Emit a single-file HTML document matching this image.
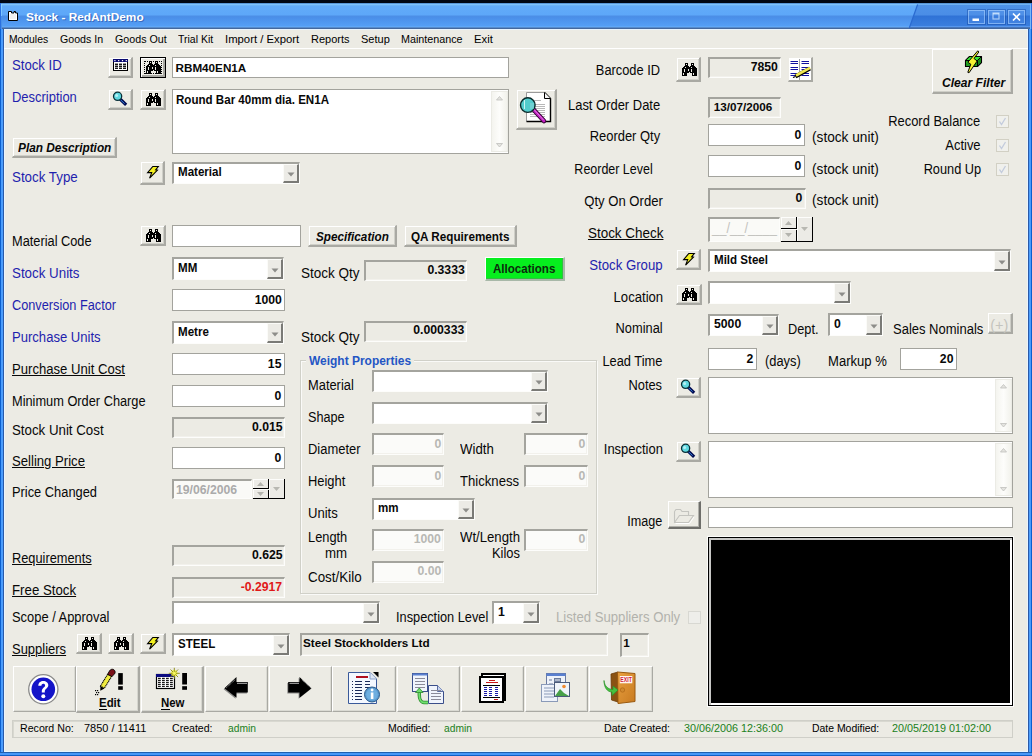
<!DOCTYPE html>
<html><head><meta charset="utf-8"><title>Stock - RedAntDemo</title>
<style>
html,body{margin:0;padding:0;width:1032px;height:756px;overflow:hidden;background:#ecebe4}
body{position:relative;font-family:"Liberation Sans",sans-serif}
div,svg{position:absolute}
.t{line-height:16px;white-space:nowrap}
</style></head><body>
<div style="left:0px;top:0px;width:1032px;height:3px;background:#000612;"></div>
<div style="left:0px;top:3px;width:1032px;height:26px;background:linear-gradient(180deg,#2a5fae 0px,#86ccff 1px,#74b8f6 2px,#62abf8 3px,#5da7f9 12px,#4d8fe6 13px,#4a8ee8 14px,#559ff6 23px,#69aef8 24px,#44689e 25px);"></div>
<svg style="left:0;top:3px" width="1032" height="26"><defs><linearGradient id="rg" x1="0" y1="0" x2="0" y2="1"><stop offset="0" stop-color="#80c4fa"/><stop offset="0.06" stop-color="#4e92e8"/><stop offset="0.46" stop-color="#4a8de6"/><stop offset="0.5" stop-color="#2f72d6"/><stop offset="0.9" stop-color="#3a7ede"/><stop offset="0.94" stop-color="#5898ee"/><stop offset="1" stop-color="#3d639c"/></linearGradient></defs><path d="M917.6 1 L1030 1 L1030 25 L909.3 25 Z" fill="url(#rg)"/><path d="M917.6 1.5 L909.3 25" stroke="#2a6ad0" stroke-width="1.2"/></svg>
<div style="left:0px;top:29px;width:4px;height:727px;background:linear-gradient(90deg,#0a60d0 0px,#0a60d0 1px,#4a9cfc 1px,#4a9cfc 3px,#2a5aa8 3px);"></div>
<div style="left:1028px;top:29px;width:4px;height:727px;background:linear-gradient(90deg,#2a5aa8 0px,#2a5aa8 1px,#4a9cfc 1px,#4a9cfc 3px,#0a60d0 3px);"></div>
<div style="left:0px;top:752px;width:1032px;height:4px;background:linear-gradient(180deg,#2060b0 0px,#2060b0 1px,#4898f8 1px,#4898f8 3px,#1060c8 3px);"></div>
<div style="left:0px;top:3px;width:1px;height:26px;background:#2a70e0;"></div>
<div style="left:1px;top:4px;width:1px;height:25px;background:linear-gradient(180deg,#86d0ff 0px,#78c0ff 12px,#4a90e8 12px);"></div>
<div style="left:1031px;top:3px;width:1px;height:26px;background:#2a70e0;"></div>
<div style="left:1030px;top:4px;width:1px;height:25px;background:#78b8f8;"></div>
<div style="left:4px;top:29px;width:1024px;height:723px;background:#ecebe4;box-shadow:inset 1px 1px 0 #e8f4ff,inset -1px -1px 0 #e8f4ff;"></div>
<svg style="left:7px;top:10px" width="12" height="12"><path d="M1.5 1.5H4.5V3H7V1.5H8.5V3H10.5V10.5H1.5Z" fill="#fff" stroke="#000" stroke-width="1"/><rect x="3" y="4" width="6" height="5" fill="#f0f0f0"/></svg>
<div class="t" style="top:9px;font-size:11px;color:#ffffff;font-weight:bold;left:26px;transform:scaleX(1.075);transform-origin:0 0;text-shadow:1px 1px 0 #3a6cc0;">Stock - RedAntDemo</div>
<div style="left:967.5px;top:10px;width:17.5px;height:13.5px;border:1px solid rgba(170,210,255,0.6);background:rgba(90,150,235,0.3);box-sizing:border-box;box-shadow:0 0 0 1px rgba(20,70,160,0.45);"></div>
<div style="left:987.5px;top:10px;width:17.5px;height:13.5px;border:1px solid rgba(170,210,255,0.6);background:rgba(90,150,235,0.3);box-sizing:border-box;box-shadow:0 0 0 1px rgba(20,70,160,0.45);"></div>
<div style="left:1007.5px;top:10px;width:17.5px;height:13.5px;border:1px solid rgba(170,210,255,0.6);background:rgba(90,150,235,0.3);box-sizing:border-box;box-shadow:0 0 0 1px rgba(20,70,160,0.45);"></div>
<svg style="left:967px;top:10px" width="60" height="14"><rect x="5.5" y="8.5" width="6.5" height="2.5" fill="#fff"/><rect x="26" y="3" width="6" height="6" fill="none" stroke="rgba(215,235,255,0.7)" stroke-width="1.2"/><rect x="26" y="3" width="6" height="1.5" fill="rgba(215,235,255,0.7)"/><path d="M46 3.5L53 10.5M53 3.5L46 10.5" stroke="#fff" stroke-width="1.7"/></svg>
<div style="left:4px;top:48px;width:1024px;height:1px;background:#ffffff;"></div>
<div class="t" style="top:31px;font-size:11.2px;color:#000;left:9px;transform:scaleX(0.9236784134464898);transform-origin:0 0;">Modules</div>
<div class="t" style="top:31px;font-size:11.2px;color:#000;left:60px;transform:scaleX(0.9505473348368997);transform-origin:0 0;">Goods In</div>
<div class="t" style="top:31px;font-size:11.2px;color:#000;left:115px;transform:scaleX(0.9545966506028545);transform-origin:0 0;">Goods Out</div>
<div class="t" style="top:31px;font-size:11.2px;color:#000;left:178px;transform:scaleX(0.9375978051687742);transform-origin:0 0;">Trial Kit</div>
<div class="t" style="top:31px;font-size:11.2px;color:#000;left:225.3px;transform:scaleX(1.011703351692867);transform-origin:0 0;">Import / Export</div>
<div class="t" style="top:31px;font-size:11.2px;color:#000;left:310.7px;transform:scaleX(0.9817922170653338);transform-origin:0 0;">Reports</div>
<div class="t" style="top:31px;font-size:11.2px;color:#000;left:361px;transform:scaleX(0.9840434619195682);transform-origin:0 0;">Setup</div>
<div class="t" style="top:31px;font-size:11.2px;color:#000;left:400.5px;transform:scaleX(0.9605938216351927);transform-origin:0 0;">Maintenance</div>
<div class="t" style="top:31px;font-size:11.2px;color:#000;left:473.5px;transform:scaleX(1.0069225928256766);transform-origin:0 0;">Exit</div>
<div class="t" style="top:58px;font-size:13.8px;color:#1f1fae;left:12px;transform:scaleX(0.9549971954148627);transform-origin:0 0;">Stock ID</div>
<div class="t" style="top:90px;font-size:13.8px;color:#1f1fae;left:12px;transform:scaleX(0.9388077196289862);transform-origin:0 0;">Description</div>
<div class="t" style="top:170px;font-size:13.8px;color:#1f1fae;left:12px;transform:scaleX(0.9674701042732072);transform-origin:0 0;">Stock Type</div>
<div class="t" style="top:234px;font-size:13.8px;color:#080808;left:12px;transform:scaleX(0.9266514892561248);transform-origin:0 0;">Material Code</div>
<div class="t" style="top:266px;font-size:13.8px;color:#1f1fae;left:12px;transform:scaleX(0.9672284203950859);transform-origin:0 0;">Stock Units</div>
<div class="t" style="top:298px;font-size:13.8px;color:#1f1fae;left:12px;transform:scaleX(0.9233849910023183);transform-origin:0 0;">Conversion Factor</div>
<div class="t" style="top:330px;font-size:13.8px;color:#1f1fae;left:12px;transform:scaleX(0.9468799417551277);transform-origin:0 0;">Purchase Units</div>
<div class="t" style="top:362px;font-size:13.8px;color:#080808;text-decoration:underline;left:12px;transform:scaleX(0.9505513513286161);transform-origin:0 0;">Purchase Unit Cost</div>
<div class="t" style="top:394px;font-size:13.8px;color:#080808;left:12px;transform:scaleX(0.9267315846997379);transform-origin:0 0;">Minimum Order Charge</div>
<div class="t" style="top:423px;font-size:13.8px;color:#080808;left:12px;transform:scaleX(0.9632479121194016);transform-origin:0 0;">Stock Unit Cost</div>
<div class="t" style="top:454px;font-size:13.8px;color:#080808;text-decoration:underline;left:12px;transform:scaleX(0.951760492079731);transform-origin:0 0;">Selling Price</div>
<div class="t" style="top:485px;font-size:13.8px;color:#080808;left:12px;transform:scaleX(0.9311512898328208);transform-origin:0 0;">Price Changed</div>
<div class="t" style="top:551px;font-size:13.8px;color:#080808;text-decoration:underline;left:12px;transform:scaleX(0.9266514892561248);transform-origin:0 0;">Requirements</div>
<div class="t" style="top:583px;font-size:13.8px;color:#080808;text-decoration:underline;left:12px;transform:scaleX(0.9607503145202009);transform-origin:0 0;">Free Stock</div>
<div class="t" style="top:610px;font-size:13.8px;color:#080808;left:12px;transform:scaleX(0.9345332500640245);transform-origin:0 0;">Scope / Approval</div>
<div class="t" style="top:642px;font-size:13.8px;color:#080808;text-decoration:underline;left:12px;transform:scaleX(0.9403993655346239);transform-origin:0 0;">Suppliers</div>
<div style="left:172px;top:57px;width:337px;height:21px;border:1px solid #a3a39d;background:#fff;box-sizing:border-box;"></div>
<div class="t" style="top:60px;font-size:11.7px;color:#080808;font-weight:bold;left:175.5px;">RBM40EN1A</div>
<div style="left:172px;top:89px;width:337px;height:65px;border:1px solid #a3a39d;background:#fff;box-sizing:border-box;"></div>
<div style="left:491px;top:91px;width:17px;height:61px;background:linear-gradient(90deg,#f4f4ef,#fdfdfb 50%,#f2f2ec);border:1px solid #ebebe5;box-sizing:border-box;"></div>
<svg style="left:496.0px;top:96px" width="7" height="5"><path d="M3.5 0.5L6.5 4H0.5Z" fill="#e4e4e0" stroke="#c0c0bc" stroke-width="0.8"/></svg>
<svg style="left:496.0px;top:143px" width="7" height="5"><path d="M0.5 0.5H6.5L3.5 4Z" fill="#e4e4e0" stroke="#c0c0bc" stroke-width="0.8"/></svg>
<div class="t" style="top:92px;font-size:13px;color:#080808;font-weight:bold;left:175.5px;transform:scaleX(0.89);transform-origin:0 0;">Round Bar 40mm dia. EN1A</div>
<div style="left:172px;top:162px;width:128px;height:22px;border-top:2px solid #a4a49e;border-left:2px solid #a4a49e;border-right:1px solid #fdfdfb;border-bottom:1px solid #fdfdfb;background:#fff;box-sizing:border-box;"></div>
<div style="left:283px;top:164px;width:16px;height:19px;background:#ecebe6;border-top:1px solid #fbfbf8;border-left:1px solid #fbfbf8;border-right:2px solid #7a7a76;border-bottom:2px solid #7a7a76;box-sizing:border-box;"></div>
<svg style="left:286.5px;top:172.0px" width="8" height="5"><path d="M0.5 0.5H7.5L4 4.5Z" fill="#8d8d8a"/></svg>
<div class="t" style="top:164px;font-size:13px;color:#080808;font-weight:bold;left:177.5px;transform:scaleX(0.89);transform-origin:0 0;">Material</div>
<div style="left:172px;top:225px;width:129px;height:22px;border:1px solid #a3a39d;background:#fff;box-sizing:border-box;"></div>
<div style="left:172px;top:257px;width:112px;height:23px;border-top:2px solid #a4a49e;border-left:2px solid #a4a49e;border-right:1px solid #fdfdfb;border-bottom:1px solid #fdfdfb;background:#fff;box-sizing:border-box;"></div>
<div style="left:267px;top:259px;width:16px;height:20px;background:#ecebe6;border-top:1px solid #fbfbf8;border-left:1px solid #fbfbf8;border-right:2px solid #7a7a76;border-bottom:2px solid #7a7a76;box-sizing:border-box;"></div>
<svg style="left:270.5px;top:267.5px" width="8" height="5"><path d="M0.5 0.5H7.5L4 4.5Z" fill="#8d8d8a"/></svg>
<div class="t" style="top:260px;font-size:13px;color:#080808;font-weight:bold;left:177.5px;transform:scaleX(0.89);transform-origin:0 0;">MM</div>
<div style="left:172px;top:289px;width:113px;height:22px;border:1px solid #a3a39d;background:#fff;box-sizing:border-box;"></div>
<div class="t" style="top:292px;font-size:13px;color:#080808;font-weight:bold;right:750.5px;text-align:right;transform:scaleX(0.94);transform-origin:100% 0;">1000</div>
<div style="left:172px;top:321px;width:112px;height:23px;border-top:2px solid #a4a49e;border-left:2px solid #a4a49e;border-right:1px solid #fdfdfb;border-bottom:1px solid #fdfdfb;background:#fff;box-sizing:border-box;"></div>
<div style="left:267px;top:323px;width:16px;height:20px;background:#ecebe6;border-top:1px solid #fbfbf8;border-left:1px solid #fbfbf8;border-right:2px solid #7a7a76;border-bottom:2px solid #7a7a76;box-sizing:border-box;"></div>
<svg style="left:270.5px;top:331.5px" width="8" height="5"><path d="M0.5 0.5H7.5L4 4.5Z" fill="#8d8d8a"/></svg>
<div class="t" style="top:324px;font-size:13px;color:#080808;font-weight:bold;left:177.5px;transform:scaleX(0.89);transform-origin:0 0;">Metre</div>
<div style="left:172px;top:353px;width:113px;height:22px;border:1px solid #a3a39d;background:#fff;box-sizing:border-box;"></div>
<div class="t" style="top:356px;font-size:13px;color:#080808;font-weight:bold;right:750.5px;text-align:right;transform:scaleX(0.94);transform-origin:100% 0;">15</div>
<div style="left:172px;top:385px;width:113px;height:22px;border:1px solid #a3a39d;background:#fff;box-sizing:border-box;"></div>
<div class="t" style="top:388px;font-size:13px;color:#080808;font-weight:bold;right:750.5px;text-align:right;transform:scaleX(0.94);transform-origin:100% 0;">0</div>
<div style="left:172px;top:417px;width:113px;height:21px;border-top:2px solid #a4a49e;border-left:2px solid #a4a49e;border-right:1px solid #fdfdfb;border-bottom:1px solid #fdfdfb;background:#ecebe4;box-sizing:border-box;box-shadow:inset -1px -1px 0 #f2f1ec;"></div>
<div class="t" style="top:419px;font-size:13px;color:#080808;font-weight:bold;right:749.5px;text-align:right;transform:scaleX(0.94);transform-origin:100% 0;">0.015</div>
<div style="left:172px;top:447px;width:113px;height:22px;border:1px solid #a3a39d;background:#fff;box-sizing:border-box;"></div>
<div class="t" style="top:450px;font-size:13px;color:#080808;font-weight:bold;right:750.5px;text-align:right;transform:scaleX(0.94);transform-origin:100% 0;">0</div>
<div style="left:172px;top:479px;width:80px;height:20px;border-top:2px solid #a4a49e;border-left:2px solid #a4a49e;border-right:1px solid #fdfdfb;border-bottom:1px solid #fdfdfb;background:#fafaf7;box-sizing:border-box;"></div>
<div class="t" style="top:482px;font-size:13px;color:#ababab;font-weight:bold;left:176px;transform:scaleX(0.94);transform-origin:0 0;">19/06/2006</div>
<div style="left:253px;top:479px;width:15px;height:9px;background:#ecebe6;box-shadow:inset 1px 1px 0 #fdfdfb;"></div>
<div style="left:253px;top:489px;width:15px;height:9px;background:#ecebe6;box-shadow:inset 1px 1px 0 #fdfdfb;"></div>
<div style="left:269px;top:479px;width:15px;height:19px;background:#ecebe6;box-shadow:inset 1px 1px 0 #fdfdfb;"></div>
<div style="left:253px;top:488px;width:16px;height:1px;background:#000;"></div>
<div style="left:253px;top:498px;width:32px;height:1px;background:#000;"></div>
<div style="left:268px;top:479px;width:1px;height:9px;background:#000;"></div>
<div style="left:268px;top:490px;width:1px;height:8px;background:#000;"></div>
<div style="left:284px;top:479px;width:1px;height:20px;background:#000;"></div>
<svg style="left:257.0px;top:481.5px" width="7" height="4"><path d="M0 4H7L3.5 0Z" fill="#b4b4ae"/></svg>
<svg style="left:257.0px;top:491.5px" width="7" height="4"><path d="M0 0H7L3.5 4Z" fill="#b4b4ae"/></svg>
<svg style="left:273.0px;top:486.5px" width="7" height="4"><path d="M0 0H7L3.5 4Z" fill="#b8b8b2"/></svg>
<div style="left:172px;top:545px;width:113px;height:21px;border-top:2px solid #a4a49e;border-left:2px solid #a4a49e;border-right:1px solid #fdfdfb;border-bottom:1px solid #fdfdfb;background:#ecebe4;box-sizing:border-box;box-shadow:inset -1px -1px 0 #f2f1ec;"></div>
<div class="t" style="top:547px;font-size:13px;color:#080808;font-weight:bold;right:749.5px;text-align:right;transform:scaleX(0.94);transform-origin:100% 0;">0.625</div>
<div style="left:172px;top:577px;width:113px;height:21px;border-top:2px solid #a4a49e;border-left:2px solid #a4a49e;border-right:1px solid #fdfdfb;border-bottom:1px solid #fdfdfb;background:#ecebe4;box-sizing:border-box;box-shadow:inset -1px -1px 0 #f2f1ec;"></div>
<div class="t" style="top:579px;font-size:13px;color:#e01818;font-weight:bold;right:749.5px;text-align:right;transform:scaleX(0.94);transform-origin:100% 0;">-0.2917</div>
<div style="left:172px;top:601px;width:208px;height:23px;border-top:2px solid #a4a49e;border-left:2px solid #a4a49e;border-right:1px solid #fdfdfb;border-bottom:1px solid #fdfdfb;background:#fff;box-sizing:border-box;"></div>
<div style="left:363px;top:603px;width:16px;height:20px;background:#ecebe6;border-top:1px solid #fbfbf8;border-left:1px solid #fbfbf8;border-right:2px solid #7a7a76;border-bottom:2px solid #7a7a76;box-sizing:border-box;"></div>
<svg style="left:366.5px;top:611.5px" width="8" height="5"><path d="M0.5 0.5H7.5L4 4.5Z" fill="#8d8d8a"/></svg>
<div style="left:172px;top:633px;width:118px;height:23px;border-top:2px solid #a4a49e;border-left:2px solid #a4a49e;border-right:1px solid #fdfdfb;border-bottom:1px solid #fdfdfb;background:#fff;box-sizing:border-box;"></div>
<div style="left:273px;top:635px;width:16px;height:20px;background:#ecebe6;border-top:1px solid #fbfbf8;border-left:1px solid #fbfbf8;border-right:2px solid #7a7a76;border-bottom:2px solid #7a7a76;box-sizing:border-box;"></div>
<svg style="left:276.5px;top:643.5px" width="8" height="5"><path d="M0.5 0.5H7.5L4 4.5Z" fill="#8d8d8a"/></svg>
<div class="t" style="top:636px;font-size:13px;color:#080808;font-weight:bold;left:177.5px;transform:scaleX(0.89);transform-origin:0 0;">STEEL</div>
<div class="t" style="top:266px;font-size:13.8px;color:#080808;left:300.7px;transform:scaleX(0.9796976061356487);transform-origin:0 0;">Stock Qty</div>
<div class="t" style="top:330px;font-size:13.8px;color:#080808;left:300.7px;transform:scaleX(0.9796976061356487);transform-origin:0 0;">Stock Qty</div>
<div style="left:364px;top:260px;width:103px;height:21px;border-top:2px solid #a4a49e;border-left:2px solid #a4a49e;border-right:1px solid #fdfdfb;border-bottom:1px solid #fdfdfb;background:#ecebe4;box-sizing:border-box;box-shadow:inset -1px -1px 0 #f2f1ec;"></div>
<div class="t" style="top:262px;font-size:13px;color:#080808;font-weight:bold;right:567.7px;text-align:right;transform:scaleX(0.94);transform-origin:100% 0;">0.3333</div>
<div style="left:364px;top:321px;width:103px;height:21px;border-top:2px solid #a4a49e;border-left:2px solid #a4a49e;border-right:1px solid #fdfdfb;border-bottom:1px solid #fdfdfb;background:#ecebe4;box-sizing:border-box;box-shadow:inset -1px -1px 0 #f2f1ec;"></div>
<div class="t" style="top:322px;font-size:13px;color:#080808;font-weight:bold;right:567.7px;text-align:right;transform:scaleX(0.94);transform-origin:100% 0;">0.000333</div>
<div style="left:300px;top:360px;width:297px;height:234px;border:1px solid #d0d0c8;box-sizing:border-box;box-shadow:inset 1px 1px 0 #fafaf8,1px 1px 0 #fafaf8;"></div>
<div style="left:306px;top:352px;width:108px;height:14px;background:#ecebe4;"></div>
<div class="t" style="top:353px;font-size:13px;color:#2456c4;font-weight:bold;left:309px;transform:scaleX(0.92);transform-origin:0 0;">Weight Properties</div>
<div class="t" style="top:378px;font-size:13.8px;color:#080808;left:308px;transform:scaleX(0.9332006375003262);transform-origin:0 0;">Material</div>
<div class="t" style="top:410px;font-size:13.8px;color:#080808;left:308px;transform:scaleX(0.917260904808336);transform-origin:0 0;">Shape</div>
<div class="t" style="top:442px;font-size:13.8px;color:#080808;left:308px;transform:scaleX(0.9378616419612695);transform-origin:0 0;">Diameter</div>
<div class="t" style="top:442px;font-size:13.8px;color:#080808;left:460.3px;transform:scaleX(0.9582103012922905);transform-origin:0 0;">Width</div>
<div class="t" style="top:474px;font-size:13.8px;color:#080808;left:308px;transform:scaleX(0.9351073422691865);transform-origin:0 0;">Height</div>
<div class="t" style="top:474px;font-size:13.8px;color:#080808;left:460.4px;transform:scaleX(0.9514265361071198);transform-origin:0 0;">Thickness</div>
<div class="t" style="top:506px;font-size:13.8px;color:#080808;left:308px;transform:scaleX(0.9478286712209357);transform-origin:0 0;">Units</div>
<div class="t" style="top:530px;font-size:13.8px;color:#080808;left:308px;transform:scaleX(0.9288157229309525);transform-origin:0 0;">Length</div>
<div class="t" style="top:546px;font-size:13.8px;color:#080808;left:324.7px;transform:scaleX(0.9612901296491129);transform-origin:0 0;">mm</div>
<div class="t" style="top:530px;font-size:13.8px;color:#080808;left:460.4px;transform:scaleX(0.9539282467096928);transform-origin:0 0;">Wt/Length</div>
<div class="t" style="top:546px;font-size:13.8px;color:#080808;right:512.4px;text-align:right;transform:scaleX(0.9360948130317771);transform-origin:100% 0;">Kilos</div>
<div class="t" style="top:570px;font-size:13.8px;color:#080808;left:308px;transform:scaleX(0.97067324044253);transform-origin:0 0;">Cost/Kilo</div>
<div style="left:372px;top:370px;width:176px;height:22px;border-top:2px solid #a4a49e;border-left:2px solid #a4a49e;border-right:1px solid #fdfdfb;border-bottom:1px solid #fdfdfb;background:#fff;box-sizing:border-box;"></div>
<div style="left:531px;top:372px;width:16px;height:19px;background:#ecebe6;border-top:1px solid #fbfbf8;border-left:1px solid #fbfbf8;border-right:2px solid #7a7a76;border-bottom:2px solid #7a7a76;box-sizing:border-box;"></div>
<svg style="left:534.5px;top:380.0px" width="8" height="5"><path d="M0.5 0.5H7.5L4 4.5Z" fill="#8d8d8a"/></svg>
<div style="left:372px;top:402px;width:176px;height:22px;border-top:2px solid #a4a49e;border-left:2px solid #a4a49e;border-right:1px solid #fdfdfb;border-bottom:1px solid #fdfdfb;background:#fff;box-sizing:border-box;"></div>
<div style="left:531px;top:404px;width:16px;height:19px;background:#ecebe6;border-top:1px solid #fbfbf8;border-left:1px solid #fbfbf8;border-right:2px solid #7a7a76;border-bottom:2px solid #7a7a76;box-sizing:border-box;"></div>
<svg style="left:534.5px;top:412.0px" width="8" height="5"><path d="M0.5 0.5H7.5L4 4.5Z" fill="#8d8d8a"/></svg>
<div style="left:372px;top:433px;width:72px;height:22px;border-top:2px solid #a4a49e;border-left:2px solid #a4a49e;border-right:1px solid #fdfdfb;border-bottom:1px solid #fdfdfb;background:#fbfbf9;box-sizing:border-box;box-shadow:inset -1px -1px 0 #f2f1ec;"></div>
<div class="t" style="top:436px;font-size:13px;color:#b8b8b4;font-weight:bold;right:590.7px;text-align:right;transform:scaleX(0.94);transform-origin:100% 0;">0</div>
<div style="left:524px;top:433px;width:64px;height:22px;border-top:2px solid #a4a49e;border-left:2px solid #a4a49e;border-right:1px solid #fdfdfb;border-bottom:1px solid #fdfdfb;background:#fbfbf9;box-sizing:border-box;box-shadow:inset -1px -1px 0 #f2f1ec;"></div>
<div class="t" style="top:436px;font-size:13px;color:#b8b8b4;font-weight:bold;right:446.70000000000005px;text-align:right;transform:scaleX(0.94);transform-origin:100% 0;">0</div>
<div style="left:372px;top:465px;width:72px;height:22px;border-top:2px solid #a4a49e;border-left:2px solid #a4a49e;border-right:1px solid #fdfdfb;border-bottom:1px solid #fdfdfb;background:#fbfbf9;box-sizing:border-box;box-shadow:inset -1px -1px 0 #f2f1ec;"></div>
<div class="t" style="top:468px;font-size:13px;color:#b8b8b4;font-weight:bold;right:590.7px;text-align:right;transform:scaleX(0.94);transform-origin:100% 0;">0</div>
<div style="left:524px;top:465px;width:64px;height:22px;border-top:2px solid #a4a49e;border-left:2px solid #a4a49e;border-right:1px solid #fdfdfb;border-bottom:1px solid #fdfdfb;background:#fbfbf9;box-sizing:border-box;box-shadow:inset -1px -1px 0 #f2f1ec;"></div>
<div class="t" style="top:468px;font-size:13px;color:#b8b8b4;font-weight:bold;right:446.70000000000005px;text-align:right;transform:scaleX(0.94);transform-origin:100% 0;">0</div>
<div style="left:372px;top:498px;width:103px;height:22px;border-top:2px solid #a4a49e;border-left:2px solid #a4a49e;border-right:1px solid #fdfdfb;border-bottom:1px solid #fdfdfb;background:#fff;box-sizing:border-box;"></div>
<div style="left:458px;top:500px;width:16px;height:19px;background:#ecebe6;border-top:1px solid #fbfbf8;border-left:1px solid #fbfbf8;border-right:2px solid #7a7a76;border-bottom:2px solid #7a7a76;box-sizing:border-box;"></div>
<svg style="left:461.5px;top:508.0px" width="8" height="5"><path d="M0.5 0.5H7.5L4 4.5Z" fill="#8d8d8a"/></svg>
<div class="t" style="top:500px;font-size:13px;color:#080808;font-weight:bold;left:377.5px;transform:scaleX(0.89);transform-origin:0 0;">mm</div>
<div style="left:372px;top:529px;width:72px;height:22px;border-top:2px solid #a4a49e;border-left:2px solid #a4a49e;border-right:1px solid #fdfdfb;border-bottom:1px solid #fdfdfb;background:#fbfbf9;box-sizing:border-box;box-shadow:inset -1px -1px 0 #f2f1ec;"></div>
<div class="t" style="top:531px;font-size:13px;color:#b8b8b4;font-weight:bold;right:590.7px;text-align:right;transform:scaleX(0.94);transform-origin:100% 0;">1000</div>
<div style="left:524px;top:529px;width:64px;height:22px;border-top:2px solid #a4a49e;border-left:2px solid #a4a49e;border-right:1px solid #fdfdfb;border-bottom:1px solid #fdfdfb;background:#fbfbf9;box-sizing:border-box;box-shadow:inset -1px -1px 0 #f2f1ec;"></div>
<div class="t" style="top:531px;font-size:13px;color:#b8b8b4;font-weight:bold;right:446.70000000000005px;text-align:right;transform:scaleX(0.94);transform-origin:100% 0;">0</div>
<div style="left:372px;top:561px;width:72px;height:22px;border-top:2px solid #a4a49e;border-left:2px solid #a4a49e;border-right:1px solid #fdfdfb;border-bottom:1px solid #fdfdfb;background:#fbfbf9;box-sizing:border-box;box-shadow:inset -1px -1px 0 #f2f1ec;"></div>
<div class="t" style="top:563px;font-size:13px;color:#b8b8b4;font-weight:bold;right:590.7px;text-align:right;transform:scaleX(0.94);transform-origin:100% 0;">0.00</div>
<div style="left:12px;top:137px;width:105px;height:21px;background:#ecebe4;border-top:1px solid #ecebe4;border-left:1px solid #ecebe4;border-right:2px solid #a9a9a3;border-bottom:2px solid #a9a9a3;box-sizing:border-box;box-shadow:inset 1px 1px 0 #fff,inset -1px -1px 0 #cfcfc8;"></div>
<div class="t" style="top:140px;font-size:13px;color:#080808;font-weight:bold;font-style:italic;left:17.5px;transform:scaleX(0.91);transform-origin:0 0;">Plan Description</div>
<div style="left:308px;top:225px;width:89px;height:22px;background:#ecebe4;border-top:1px solid #ecebe4;border-left:1px solid #ecebe4;border-right:2px solid #a9a9a3;border-bottom:2px solid #a9a9a3;box-sizing:border-box;box-shadow:inset 1px 1px 0 #fff,inset -1px -1px 0 #cfcfc8;"></div>
<div class="t" style="top:229px;font-size:13px;color:#080808;font-weight:bold;font-style:italic;left:316px;transform:scaleX(0.9);transform-origin:0 0;">Specification</div>
<div style="left:404px;top:225px;width:113px;height:22px;background:#ecebe4;border-top:1px solid #ecebe4;border-left:1px solid #ecebe4;border-right:2px solid #a9a9a3;border-bottom:2px solid #a9a9a3;box-sizing:border-box;box-shadow:inset 1px 1px 0 #fff,inset -1px -1px 0 #cfcfc8;"></div>
<div class="t" style="top:229px;font-size:13px;color:#080808;font-weight:bold;left:410.7px;transform:scaleX(0.9);transform-origin:0 0;">QA Requirements</div>
<div style="left:485px;top:257px;width:80px;height:24px;background:#06ee1e;border-top:1px solid #fff;border-left:1px solid #fff;border-right:2px solid #a8b8a8;border-bottom:2px solid #a8b8a8;box-sizing:border-box;box-shadow:inset -1px -1px 0 #30c040;"></div>
<div class="t" style="top:261px;font-size:13px;color:#0c2a0c;font-weight:bold;left:492.5px;transform:scaleX(0.89);transform-origin:0 0;">Allocations</div>
<div class="t" style="top:610px;font-size:13.8px;color:#080808;left:396.2px;transform:scaleX(0.9255307481394438);transform-origin:0 0;">Inspection Level</div>
<div style="left:492px;top:601px;width:48px;height:23px;border-top:2px solid #a4a49e;border-left:2px solid #a4a49e;border-right:1px solid #fdfdfb;border-bottom:1px solid #fdfdfb;background:#fff;box-sizing:border-box;"></div>
<div style="left:523px;top:603px;width:16px;height:20px;background:#ecebe6;border-top:1px solid #fbfbf8;border-left:1px solid #fbfbf8;border-right:2px solid #7a7a76;border-bottom:2px solid #7a7a76;box-sizing:border-box;"></div>
<svg style="left:526.5px;top:611.5px" width="8" height="5"><path d="M0.5 0.5H7.5L4 4.5Z" fill="#8d8d8a"/></svg>
<div class="t" style="top:604px;font-size:13px;color:#080808;font-weight:bold;left:497.5px;transform:scaleX(0.94);transform-origin:0 0;">1</div>
<div class="t" style="top:610px;font-size:13.8px;color:#b2b2ac;left:556.3px;transform:scaleX(0.9525069453631433);transform-origin:0 0;">Listed Suppliers Only</div>
<div style="left:688.3px;top:611.3px;width:12.5px;height:12.5px;border:1px solid #d8d8d2;background:#eeeeea;box-sizing:border-box;"></div>
<div style="left:300px;top:633px;width:308px;height:23px;border-top:2px solid #a4a49e;border-left:2px solid #a4a49e;border-right:1px solid #fdfdfb;border-bottom:1px solid #fdfdfb;background:#ecebe4;box-sizing:border-box;box-shadow:inset -1px -1px 0 #f2f1ec;"></div>
<div class="t" style="top:635px;font-size:11.7px;color:#080808;font-weight:bold;left:303px;">Steel Stockholders Ltd</div>
<div style="left:620px;top:633px;width:29px;height:24px;border-top:2px solid #a4a49e;border-left:2px solid #a4a49e;border-right:1px solid #fdfdfb;border-bottom:1px solid #fdfdfb;background:#ecebe4;box-sizing:border-box;box-shadow:inset -1px -1px 0 #f2f1ec;"></div>
<div class="t" style="top:635px;font-size:11.7px;color:#080808;font-weight:bold;left:623.3px;">1</div>
<div class="t" style="top:63px;font-size:13.8px;color:#080808;right:372.29999999999995px;text-align:right;transform:scaleX(0.9300278954044563);transform-origin:100% 0;">Barcode ID</div>
<div class="t" style="top:98px;font-size:13.8px;color:#080808;right:372.29999999999995px;text-align:right;transform:scaleX(0.9391895161187637);transform-origin:100% 0;">Last Order Date</div>
<div class="t" style="top:129px;font-size:13.8px;color:#080808;right:372.29999999999995px;text-align:right;transform:scaleX(0.9380746018796421);transform-origin:100% 0;">Reorder Qty</div>
<div class="t" style="top:162px;font-size:13.8px;color:#080808;right:379.4px;text-align:right;transform:scaleX(0.903376955450926);transform-origin:100% 0;">Reorder Level</div>
<div class="t" style="top:194px;font-size:13.8px;color:#080808;right:369px;text-align:right;transform:scaleX(0.9478948395201207);transform-origin:100% 0;">Qty On Order</div>
<div class="t" style="top:226px;font-size:13.8px;color:#080808;text-decoration:underline;right:369px;text-align:right;transform:scaleX(0.9746824616864266);transform-origin:100% 0;">Stock Check</div>
<div class="t" style="top:258px;font-size:13.8px;color:#1f1fae;right:369px;text-align:right;transform:scaleX(0.9583063402231974);transform-origin:100% 0;">Stock Group</div>
<div class="t" style="top:290px;font-size:13.8px;color:#080808;right:369px;text-align:right;transform:scaleX(0.9507294296641717);transform-origin:100% 0;">Location</div>
<div class="t" style="top:321px;font-size:13.8px;color:#080808;right:369.5px;text-align:right;transform:scaleX(0.9285635788223294);transform-origin:100% 0;">Nominal</div>
<div class="t" style="top:354px;font-size:13.8px;color:#080808;right:369.5px;text-align:right;transform:scaleX(0.931198947745189);transform-origin:100% 0;">Lead Time</div>
<div class="t" style="top:378px;font-size:13.8px;color:#080808;right:369.5px;text-align:right;transform:scaleX(0.9320856977899371);transform-origin:100% 0;">Notes</div>
<div class="t" style="top:442px;font-size:13.8px;color:#080808;right:369.5px;text-align:right;transform:scaleX(0.9395226974316632);transform-origin:100% 0;">Inspection</div>
<div class="t" style="top:514px;font-size:13.8px;color:#080808;right:369.5px;text-align:right;transform:scaleX(0.9126213908675932);transform-origin:100% 0;">Image</div>
<div style="left:708px;top:57px;width:73px;height:21px;border-top:2px solid #a4a49e;border-left:2px solid #a4a49e;border-right:1px solid #fdfdfb;border-bottom:1px solid #fdfdfb;background:#ecebe4;box-sizing:border-box;box-shadow:inset -1px -1px 0 #f2f1ec;"></div>
<div class="t" style="top:59px;font-size:13px;color:#080808;font-weight:bold;right:254px;text-align:right;transform:scaleX(0.94);transform-origin:100% 0;">7850</div>
<div style="left:708px;top:97px;width:73px;height:21px;border-top:2px solid #a4a49e;border-left:2px solid #a4a49e;border-right:1px solid #fdfdfb;border-bottom:1px solid #fdfdfb;background:#ecebe4;box-sizing:border-box;box-shadow:inset -1px -1px 0 #f2f1ec;"></div>
<div class="t" style="top:99px;font-size:11.7px;color:#080808;font-weight:bold;left:713.7px;">13/07/2006</div>
<div style="left:708px;top:124px;width:97px;height:22px;border:1px solid #a3a39d;background:#fff;box-sizing:border-box;"></div>
<div class="t" style="top:127px;font-size:13px;color:#080808;font-weight:bold;right:230.5px;text-align:right;transform:scaleX(0.94);transform-origin:100% 0;">0</div>
<div style="left:708px;top:155px;width:97px;height:22px;border:1px solid #a3a39d;background:#fff;box-sizing:border-box;"></div>
<div class="t" style="top:158px;font-size:13px;color:#080808;font-weight:bold;right:230.5px;text-align:right;transform:scaleX(0.94);transform-origin:100% 0;">0</div>
<div style="left:708px;top:188px;width:98px;height:21px;border-top:2px solid #a4a49e;border-left:2px solid #a4a49e;border-right:1px solid #fdfdfb;border-bottom:1px solid #fdfdfb;background:#ecebe4;box-sizing:border-box;box-shadow:inset -1px -1px 0 #f2f1ec;"></div>
<div class="t" style="top:190px;font-size:13px;color:#080808;font-weight:bold;right:229.5px;text-align:right;transform:scaleX(0.94);transform-origin:100% 0;">0</div>
<div class="t" style="top:130px;font-size:13.8px;color:#080808;left:811.7px;transform:scaleX(0.9899252323031645);transform-origin:0 0;">(stock unit)</div>
<div class="t" style="top:162px;font-size:13.8px;color:#080808;left:811.7px;transform:scaleX(0.9899252323031645);transform-origin:0 0;">(stock unit)</div>
<div class="t" style="top:193px;font-size:13.8px;color:#080808;left:811.7px;transform:scaleX(0.9899252323031645);transform-origin:0 0;">(stock unit)</div>
<div style="left:708px;top:217px;width:72px;height:25px;border-top:2px solid #a4a49e;border-left:2px solid #a4a49e;border-right:1px solid #fdfdfb;border-bottom:1px solid #fdfdfb;background:#fafaf7;box-sizing:border-box;"></div>
<div class="t" style="top:221px;font-size:13.8px;color:#c4c4c0;left:712px;transform:scaleX(0.94);transform-origin:0 0;">__/__/____</div>
<div style="left:781px;top:217px;width:15px;height:11px;background:#ecebe6;box-shadow:inset 1px 1px 0 #fdfdfb;"></div>
<div style="left:781px;top:229px;width:15px;height:12px;background:#ecebe6;box-shadow:inset 1px 1px 0 #fdfdfb;"></div>
<div style="left:797px;top:217px;width:15px;height:24px;background:#ecebe6;box-shadow:inset 1px 1px 0 #fdfdfb;"></div>
<div style="left:781px;top:228px;width:16px;height:1px;background:#000;"></div>
<div style="left:781px;top:241px;width:32px;height:1px;background:#000;"></div>
<div style="left:796px;top:217px;width:1px;height:11px;background:#000;"></div>
<div style="left:796px;top:230px;width:1px;height:11px;background:#000;"></div>
<div style="left:812px;top:217px;width:1px;height:25px;background:#000;"></div>
<svg style="left:785.0px;top:220.5px" width="7" height="4"><path d="M0 4H7L3.5 0Z" fill="#b4b4ae"/></svg>
<svg style="left:785.0px;top:233.0px" width="7" height="4"><path d="M0 0H7L3.5 4Z" fill="#b4b4ae"/></svg>
<svg style="left:801.0px;top:227.0px" width="7" height="4"><path d="M0 0H7L3.5 4Z" fill="#b8b8b2"/></svg>
<div style="left:708px;top:249px;width:303px;height:23px;border-top:2px solid #a4a49e;border-left:2px solid #a4a49e;border-right:1px solid #fdfdfb;border-bottom:1px solid #fdfdfb;background:#fff;box-sizing:border-box;"></div>
<div style="left:994px;top:251px;width:16px;height:20px;background:#ecebe6;border-top:1px solid #fbfbf8;border-left:1px solid #fbfbf8;border-right:2px solid #7a7a76;border-bottom:2px solid #7a7a76;box-sizing:border-box;"></div>
<svg style="left:997.5px;top:259.5px" width="8" height="5"><path d="M0.5 0.5H7.5L4 4.5Z" fill="#8d8d8a"/></svg>
<div class="t" style="top:252px;font-size:13px;color:#080808;font-weight:bold;left:713.5px;transform:scaleX(0.89);transform-origin:0 0;">Mild Steel</div>
<div style="left:708px;top:281px;width:143px;height:23px;border-top:2px solid #a4a49e;border-left:2px solid #a4a49e;border-right:1px solid #fdfdfb;border-bottom:1px solid #fdfdfb;background:#fff;box-sizing:border-box;"></div>
<div style="left:834px;top:283px;width:16px;height:20px;background:#ecebe6;border-top:1px solid #fbfbf8;border-left:1px solid #fbfbf8;border-right:2px solid #7a7a76;border-bottom:2px solid #7a7a76;box-sizing:border-box;"></div>
<svg style="left:837.5px;top:291.5px" width="8" height="5"><path d="M0.5 0.5H7.5L4 4.5Z" fill="#8d8d8a"/></svg>
<div style="left:708px;top:314px;width:71px;height:22px;border-top:2px solid #a4a49e;border-left:2px solid #a4a49e;border-right:1px solid #fdfdfb;border-bottom:1px solid #fdfdfb;background:#fff;box-sizing:border-box;"></div>
<div style="left:762px;top:316px;width:16px;height:19px;background:#ecebe6;border-top:1px solid #fbfbf8;border-left:1px solid #fbfbf8;border-right:2px solid #7a7a76;border-bottom:2px solid #7a7a76;box-sizing:border-box;"></div>
<svg style="left:765.5px;top:324.0px" width="8" height="5"><path d="M0.5 0.5H7.5L4 4.5Z" fill="#8d8d8a"/></svg>
<div class="t" style="top:316px;font-size:13px;color:#080808;font-weight:bold;left:713.5px;transform:scaleX(0.94);transform-origin:0 0;">5000</div>
<div class="t" style="top:322px;font-size:13.8px;color:#080808;left:788.3px;transform:scaleX(0.924746831605118);transform-origin:0 0;">Dept.</div>
<div style="left:828px;top:313px;width:55px;height:23px;border-top:2px solid #a4a49e;border-left:2px solid #a4a49e;border-right:1px solid #fdfdfb;border-bottom:1px solid #fdfdfb;background:#fff;box-sizing:border-box;"></div>
<div style="left:866px;top:315px;width:16px;height:20px;background:#ecebe6;border-top:1px solid #fbfbf8;border-left:1px solid #fbfbf8;border-right:2px solid #7a7a76;border-bottom:2px solid #7a7a76;box-sizing:border-box;"></div>
<svg style="left:869.5px;top:323.5px" width="8" height="5"><path d="M0.5 0.5H7.5L4 4.5Z" fill="#8d8d8a"/></svg>
<div class="t" style="top:316px;font-size:13px;color:#080808;font-weight:bold;left:833.5px;transform:scaleX(0.94);transform-origin:0 0;">0</div>
<div class="t" style="top:322px;font-size:13.8px;color:#080808;left:892.5px;transform:scaleX(0.9419100080872048);transform-origin:0 0;">Sales Nominals</div>
<div style="left:988px;top:313px;width:25px;height:21px;background:#ecebe4;border-top:1px solid #fff;border-left:1px solid #fff;border-right:2px solid #a9a9a3;border-bottom:2px solid #a9a9a3;box-sizing:border-box;box-shadow:inset -1px -1px 0 #cfcfc8;"></div>
<div class="t" style="top:318px;font-size:13.8px;color:#c4c4be;right:24px;text-align:right;transform:scaleX(1.05);transform-origin:100% 0;">(+)</div>
<div style="left:708px;top:348px;width:49px;height:22px;border:1px solid #a3a39d;background:#fff;box-sizing:border-box;"></div>
<div class="t" style="top:351px;font-size:13px;color:#080808;font-weight:bold;right:278.5px;text-align:right;transform:scaleX(0.94);transform-origin:100% 0;">2</div>
<div class="t" style="top:354px;font-size:13.8px;color:#080808;left:764.7px;transform:scaleX(0.9337963189383935);transform-origin:0 0;">(days)</div>
<div class="t" style="top:354px;font-size:13.8px;color:#080808;left:828.3px;transform:scaleX(0.946596959781703);transform-origin:0 0;">Markup %</div>
<div style="left:900px;top:348px;width:57px;height:22px;border:1px solid #a3a39d;background:#fff;box-sizing:border-box;"></div>
<div class="t" style="top:351px;font-size:13px;color:#080808;font-weight:bold;right:78.5px;text-align:right;transform:scaleX(0.94);transform-origin:100% 0;">20</div>
<div style="left:708px;top:377px;width:305px;height:57px;border:1px solid #a3a39d;background:#fff;box-sizing:border-box;"></div>
<div style="left:995px;top:379px;width:17px;height:53px;background:linear-gradient(90deg,#f4f4ef,#fdfdfb 50%,#f2f2ec);border:1px solid #ebebe5;box-sizing:border-box;"></div>
<svg style="left:1000.0px;top:384px" width="7" height="5"><path d="M3.5 0.5L6.5 4H0.5Z" fill="#e4e4e0" stroke="#c0c0bc" stroke-width="0.8"/></svg>
<svg style="left:1000.0px;top:423px" width="7" height="5"><path d="M0.5 0.5H6.5L3.5 4Z" fill="#e4e4e0" stroke="#c0c0bc" stroke-width="0.8"/></svg>
<div style="left:708px;top:441px;width:305px;height:57px;border:1px solid #a3a39d;background:#fff;box-sizing:border-box;"></div>
<div style="left:995px;top:443px;width:17px;height:53px;background:linear-gradient(90deg,#f4f4ef,#fdfdfb 50%,#f2f2ec);border:1px solid #ebebe5;box-sizing:border-box;"></div>
<svg style="left:1000.0px;top:448px" width="7" height="5"><path d="M3.5 0.5L6.5 4H0.5Z" fill="#e4e4e0" stroke="#c0c0bc" stroke-width="0.8"/></svg>
<svg style="left:1000.0px;top:487px" width="7" height="5"><path d="M0.5 0.5H6.5L3.5 4Z" fill="#e4e4e0" stroke="#c0c0bc" stroke-width="0.8"/></svg>
<div style="left:708px;top:507px;width:305px;height:21px;border:1px solid #a3a39d;background:#fff;box-sizing:border-box;"></div>
<div style="left:707px;top:536px;width:307px;height:171px;background:#fdfdfb;"></div>
<div style="left:708px;top:537px;width:305px;height:169px;background:#000;"></div>
<div style="left:709px;top:538px;width:303px;height:167px;background:#fff;border-top:2px solid #c8c8c6;border-left:2px solid #c8c8c6;box-sizing:border-box;"></div>
<div style="left:711px;top:540px;width:299px;height:163px;background:#000;"></div>
<div class="t" style="top:114px;font-size:13.8px;color:#080808;right:51.5px;text-align:right;transform:scaleX(0.9370081622195381);transform-origin:100% 0;">Record Balance</div>
<div class="t" style="top:138px;font-size:13.8px;color:#080808;right:51.5px;text-align:right;transform:scaleX(0.9393513020859319);transform-origin:100% 0;">Active</div>
<div class="t" style="top:162px;font-size:13.8px;color:#080808;right:51px;text-align:right;transform:scaleX(0.9253796948560455);transform-origin:100% 0;">Round Up</div>
<div style="left:996px;top:115px;width:13px;height:13px;border:1px solid #d2d0c4;background:#f0f0ec;box-sizing:border-box;"></div>
<svg style="left:996px;top:115px" width="13" height="13"><path d="M3.5 6.5L5.5 9.5L9.5 3" fill="none" stroke="#c3cbdc" stroke-width="1.3"/></svg>
<div style="left:996px;top:139px;width:13px;height:13px;border:1px solid #d2d0c4;background:#f0f0ec;box-sizing:border-box;"></div>
<svg style="left:996px;top:139px" width="13" height="13"><path d="M3.5 6.5L5.5 9.5L9.5 3" fill="none" stroke="#c3cbdc" stroke-width="1.3"/></svg>
<div style="left:996px;top:163px;width:13px;height:13px;border:1px solid #d2d0c4;background:#f0f0ec;box-sizing:border-box;"></div>
<svg style="left:996px;top:163px" width="13" height="13"><path d="M3.5 6.5L5.5 9.5L9.5 3" fill="none" stroke="#c3cbdc" stroke-width="1.3"/></svg>
<div style="left:932px;top:49px;width:81px;height:45px;background:#ecebe4;border-top:1px solid #fff;border-left:1px solid #fff;border-right:2px solid #a9a9a3;border-bottom:2px solid #a9a9a3;box-sizing:border-box;box-shadow:inset -1px -1px 0 #cfcfc8;"></div>
<div class="t" style="top:75px;font-size:13px;color:#080808;font-weight:bold;font-style:italic;left:942px;transform:scaleX(0.93);transform-origin:0 0;">Clear Filter</div>
<div style="left:12.3px;top:720.3px;width:1000.5px;height:17.3px;border:1px solid #cfcfc8;box-sizing:border-box;box-shadow:inset 1px 1px 0 #d8d8d0;"></div>
<div class="t" style="top:720px;font-size:10.7px;color:#000;left:19.9px;transform:scaleX(0.9942051859096132);transform-origin:0 0;">Record No:</div>
<div class="t" style="top:720px;font-size:10.7px;color:#000;left:84.10000000000001px;transform:scaleX(1.024944788850235);transform-origin:0 0;">7850 / 11411</div>
<div class="t" style="top:720px;font-size:10.7px;color:#000;left:172.3px;transform:scaleX(0.9893710388890897);transform-origin:0 0;">Created:</div>
<div class="t" style="top:720px;font-size:10.7px;color:#208020;left:227.8px;transform:scaleX(0.9608527568216793);transform-origin:0 0;">admin</div>
<div class="t" style="top:720px;font-size:10.7px;color:#000;left:387.9px;transform:scaleX(0.9766529696750261);transform-origin:0 0;">Modified:</div>
<div class="t" style="top:720px;font-size:10.7px;color:#208020;left:443.9px;transform:scaleX(0.9608527568216793);transform-origin:0 0;">admin</div>
<div class="t" style="top:720px;font-size:10.7px;color:#000;left:603.8px;transform:scaleX(0.9923558293750369);transform-origin:0 0;">Date Created:</div>
<div class="t" style="top:720px;font-size:10.7px;color:#208020;left:683.5px;transform:scaleX(1.0084977394752375);transform-origin:0 0;">30/06/2006 12:36:00</div>
<div class="t" style="top:720px;font-size:10.7px;color:#000;left:811.6999999999999px;transform:scaleX(0.9755520831611041);transform-origin:0 0;">Date Modified:</div>
<div class="t" style="top:720px;font-size:10.7px;color:#208020;left:891.5px;transform:scaleX(1.009516424060566);transform-origin:0 0;">20/05/2019 01:02:00</div>
<div style="left:108px;top:57px;width:25px;height:21px;background:#ecebe4;border-top:1px solid #ecebe4;border-left:1px solid #ecebe4;border-right:2px solid #a9a9a3;border-bottom:2px solid #a9a9a3;box-sizing:border-box;box-shadow:inset 1px 1px 0 #fff,inset -1px -1px 0 #cfcfc8;"></div>
<svg style="left:113px;top:59px" width="15" height="12" viewBox="0 0 15 12"><rect x="0.5" y="0.5" width="14" height="11" fill="#fff" stroke="#000" stroke-width="1"/><rect x="0" y="0" width="15" height="3" fill="#0a0a70"/><rect x="1.3" y="1" width="1.2" height="1.2" fill="#fff"/><rect x="5.1" y="1" width="1.2" height="1.2" fill="#fff"/><rect x="8.9" y="1" width="1.2" height="1.2" fill="#fff"/><rect x="12.7" y="1" width="1.2" height="1.2" fill="#fff"/><rect x="2" y="4.6" width="3" height="1.3" fill="#000"/><rect x="6" y="4.6" width="3" height="1.3" fill="#000"/><rect x="10" y="4.6" width="3" height="1.3" fill="#000"/><rect x="2" y="6.6" width="3" height="1.3" fill="#000"/><rect x="6" y="6.6" width="3" height="1.3" fill="#000"/><rect x="10" y="6.6" width="3" height="1.3" fill="#000"/><rect x="2" y="8.6" width="3" height="1.3" fill="#000"/><rect x="6" y="8.6" width="3" height="1.3" fill="#000"/><rect x="10" y="8.6" width="3" height="1.3" fill="#000"/></svg>
<div style="left:140px;top:57px;width:26px;height:21px;border:1px solid #000;background:#ecebe4;box-sizing:border-box;box-shadow:inset 1px 1px 0 #fff,inset -2px -2px 0 #a9a9a3;"></div>
<svg style="left:146px;top:61px" width="15" height="13" viewBox="0 0 15 13"><path shape-rendering="crispEdges" d="M3 0h3v1h-3zM9 0h3v1h-3zM3 1h1v1h-1zM5 1h1v1h-1zM9 1h1v1h-1zM11 1h1v1h-1zM3 2h3v1h-3zM9 2h3v1h-3zM2 3h5v1h-5zM8 3h5v1h-5zM1 4h2v1h-2zM4 4h5v1h-5zM10 4h4v1h-4zM0 5h15v1h-15zM0 6h2v1h-2zM3 6h3v1h-3zM7 6h2v1h-2zM10 6h5v1h-5zM0 7h2v1h-2zM3 7h3v1h-3zM7 7h2v1h-2zM10 7h5v1h-5zM0 8h2v1h-2zM3 8h6v1h-6zM10 8h5v1h-5zM0 9h7v1h-7zM8 9h7v1h-7zM0 10h1v1h-1zM2 10h3v1h-3zM10 10h1v1h-1zM12 10h3v1h-3zM0 11h1v1h-1zM2 11h3v1h-3zM10 11h1v1h-1zM12 11h3v1h-3zM0 12h5v1h-5zM10 12h5v1h-5z" fill="#000"/></svg>
<div style="left:144px;top:61px;width:18px;height:13px;border:1px dotted #000;box-sizing:border-box;"></div>
<div style="left:108px;top:89px;width:25px;height:21px;background:#ecebe4;border-top:1px solid #ecebe4;border-left:1px solid #ecebe4;border-right:2px solid #a9a9a3;border-bottom:2px solid #a9a9a3;box-sizing:border-box;box-shadow:inset 1px 1px 0 #fff,inset -1px -1px 0 #cfcfc8;"></div>
<svg style="left:112px;top:91px" width="16" height="16" viewBox="0 0 16 16"><path d="M8 8L13 12.8" stroke="#000a50" stroke-width="3.2" stroke-linecap="square"/><path d="M8.3 8.6L12.6 12.6" stroke="#3a8ae8" stroke-width="0.9"/><circle cx="5.6" cy="5.3" r="4.1" fill="#5ed8e0" stroke="#0a3038" stroke-width="1.3"/><circle cx="4.6" cy="4.4" r="1.5" fill="#b8f0f4"/></svg>
<div style="left:140px;top:89px;width:26px;height:21px;background:#ecebe4;border-top:1px solid #ecebe4;border-left:1px solid #ecebe4;border-right:2px solid #a9a9a3;border-bottom:2px solid #a9a9a3;box-sizing:border-box;box-shadow:inset 1px 1px 0 #fff,inset -1px -1px 0 #cfcfc8;"></div>
<svg style="left:146px;top:93px" width="15" height="13" viewBox="0 0 15 13"><path shape-rendering="crispEdges" d="M3 0h3v1h-3zM9 0h3v1h-3zM3 1h1v1h-1zM5 1h1v1h-1zM9 1h1v1h-1zM11 1h1v1h-1zM3 2h3v1h-3zM9 2h3v1h-3zM2 3h5v1h-5zM8 3h5v1h-5zM1 4h2v1h-2zM4 4h5v1h-5zM10 4h4v1h-4zM0 5h15v1h-15zM0 6h2v1h-2zM3 6h3v1h-3zM7 6h2v1h-2zM10 6h5v1h-5zM0 7h2v1h-2zM3 7h3v1h-3zM7 7h2v1h-2zM10 7h5v1h-5zM0 8h2v1h-2zM3 8h6v1h-6zM10 8h5v1h-5zM0 9h7v1h-7zM8 9h7v1h-7zM0 10h1v1h-1zM2 10h3v1h-3zM10 10h1v1h-1zM12 10h3v1h-3zM0 11h1v1h-1zM2 11h3v1h-3zM10 11h1v1h-1zM12 11h3v1h-3zM0 12h5v1h-5zM10 12h5v1h-5z" fill="#000"/></svg>
<div style="left:140px;top:161px;width:25px;height:24px;background:#ecebe4;border-top:1px solid #ecebe4;border-left:1px solid #ecebe4;border-right:2px solid #a9a9a3;border-bottom:2px solid #a9a9a3;box-sizing:border-box;box-shadow:inset 1px 1px 0 #fff,inset -1px -1px 0 #cfcfc8;"></div>
<svg style="left:146px;top:165px" width="14" height="14" viewBox="0 0 14 14"><path d="M6.8 1.5H12.3L9.6 4.8L11.5 5.2L3.6 13.2L5.7 7.6H1.6Z" fill="#f4f020" stroke="#000" stroke-width="1.1" stroke-linejoin="miter"/></svg>
<div style="left:140px;top:225px;width:26px;height:21px;background:#ecebe4;border-top:1px solid #ecebe4;border-left:1px solid #ecebe4;border-right:2px solid #a9a9a3;border-bottom:2px solid #a9a9a3;box-sizing:border-box;box-shadow:inset 1px 1px 0 #fff,inset -1px -1px 0 #cfcfc8;"></div>
<svg style="left:146px;top:229px" width="15" height="13" viewBox="0 0 15 13"><path shape-rendering="crispEdges" d="M3 0h3v1h-3zM9 0h3v1h-3zM3 1h1v1h-1zM5 1h1v1h-1zM9 1h1v1h-1zM11 1h1v1h-1zM3 2h3v1h-3zM9 2h3v1h-3zM2 3h5v1h-5zM8 3h5v1h-5zM1 4h2v1h-2zM4 4h5v1h-5zM10 4h4v1h-4zM0 5h15v1h-15zM0 6h2v1h-2zM3 6h3v1h-3zM7 6h2v1h-2zM10 6h5v1h-5zM0 7h2v1h-2zM3 7h3v1h-3zM7 7h2v1h-2zM10 7h5v1h-5zM0 8h2v1h-2zM3 8h6v1h-6zM10 8h5v1h-5zM0 9h7v1h-7zM8 9h7v1h-7zM0 10h1v1h-1zM2 10h3v1h-3zM10 10h1v1h-1zM12 10h3v1h-3zM0 11h1v1h-1zM2 11h3v1h-3zM10 11h1v1h-1zM12 11h3v1h-3zM0 12h5v1h-5zM10 12h5v1h-5z" fill="#000"/></svg>
<div style="left:76px;top:633px;width:26px;height:21px;background:#ecebe4;border-top:1px solid #ecebe4;border-left:1px solid #ecebe4;border-right:2px solid #a9a9a3;border-bottom:2px solid #a9a9a3;box-sizing:border-box;box-shadow:inset 1px 1px 0 #fff,inset -1px -1px 0 #cfcfc8;"></div>
<svg style="left:82px;top:637px" width="15" height="13" viewBox="0 0 15 13"><path shape-rendering="crispEdges" d="M3 0h3v1h-3zM9 0h3v1h-3zM3 1h1v1h-1zM5 1h1v1h-1zM9 1h1v1h-1zM11 1h1v1h-1zM3 2h3v1h-3zM9 2h3v1h-3zM2 3h5v1h-5zM8 3h5v1h-5zM1 4h2v1h-2zM4 4h5v1h-5zM10 4h4v1h-4zM0 5h15v1h-15zM0 6h2v1h-2zM3 6h3v1h-3zM7 6h2v1h-2zM10 6h5v1h-5zM0 7h2v1h-2zM3 7h3v1h-3zM7 7h2v1h-2zM10 7h5v1h-5zM0 8h2v1h-2zM3 8h6v1h-6zM10 8h5v1h-5zM0 9h7v1h-7zM8 9h7v1h-7zM0 10h1v1h-1zM2 10h3v1h-3zM10 10h1v1h-1zM12 10h3v1h-3zM0 11h1v1h-1zM2 11h3v1h-3zM10 11h1v1h-1zM12 11h3v1h-3zM0 12h5v1h-5zM10 12h5v1h-5z" fill="#000"/></svg>
<div style="left:108px;top:633px;width:26px;height:21px;background:#ecebe4;border-top:1px solid #ecebe4;border-left:1px solid #ecebe4;border-right:2px solid #a9a9a3;border-bottom:2px solid #a9a9a3;box-sizing:border-box;box-shadow:inset 1px 1px 0 #fff,inset -1px -1px 0 #cfcfc8;"></div>
<svg style="left:114px;top:637px" width="15" height="13" viewBox="0 0 15 13"><path shape-rendering="crispEdges" d="M3 0h3v1h-3zM9 0h3v1h-3zM3 1h1v1h-1zM5 1h1v1h-1zM9 1h1v1h-1zM11 1h1v1h-1zM3 2h3v1h-3zM9 2h3v1h-3zM2 3h5v1h-5zM8 3h5v1h-5zM1 4h2v1h-2zM4 4h5v1h-5zM10 4h4v1h-4zM0 5h15v1h-15zM0 6h2v1h-2zM3 6h3v1h-3zM7 6h2v1h-2zM10 6h5v1h-5zM0 7h2v1h-2zM3 7h3v1h-3zM7 7h2v1h-2zM10 7h5v1h-5zM0 8h2v1h-2zM3 8h6v1h-6zM10 8h5v1h-5zM0 9h7v1h-7zM8 9h7v1h-7zM0 10h1v1h-1zM2 10h3v1h-3zM10 10h1v1h-1zM12 10h3v1h-3zM0 11h1v1h-1zM2 11h3v1h-3zM10 11h1v1h-1zM12 11h3v1h-3zM0 12h5v1h-5zM10 12h5v1h-5z" fill="#000"/></svg>
<div style="left:140px;top:633px;width:26px;height:21px;background:#ecebe4;border-top:1px solid #ecebe4;border-left:1px solid #ecebe4;border-right:2px solid #a9a9a3;border-bottom:2px solid #a9a9a3;box-sizing:border-box;box-shadow:inset 1px 1px 0 #fff,inset -1px -1px 0 #cfcfc8;"></div>
<svg style="left:146px;top:636px" width="14" height="14" viewBox="0 0 14 14"><path d="M6.8 1.5H12.3L9.6 4.8L11.5 5.2L3.6 13.2L5.7 7.6H1.6Z" fill="#f4f020" stroke="#000" stroke-width="1.1" stroke-linejoin="miter"/></svg>
<div style="left:516px;top:89px;width:41px;height:41px;background:#ecebe4;border-top:1px solid #ecebe4;border-left:1px solid #ecebe4;border-right:2px solid #a9a9a3;border-bottom:2px solid #a9a9a3;box-sizing:border-box;box-shadow:inset 1px 1px 0 #fff,inset -1px -1px 0 #cfcfc8;"></div>
<svg style="left:518px;top:90px" width="38" height="38" viewBox="0 0 38 38"><path d="M8.5 2.5H26.5L32.5 8.5V31.5H8.5Z" fill="#fff"/><path d="M8.5 31.5V2.5H26.5" fill="none" stroke="#9a9a9a" stroke-width="1"/><path d="M26.5 2.5L32.5 8.5V31.5H8.5" fill="none" stroke="#000" stroke-width="1.4"/><path d="M26.5 2.5V8.5H32.5" fill="#f4f4f4" stroke="#000" stroke-width="1"/><path d="M16 10.5H23M12 14.5H27M12 16.5H27M12 18.5H27M12 20.5H27M12 22.5H27M12 24.5H27M12 26.5H27" stroke="#b8b8b8" stroke-width="1"/><path d="M15 19L26 31" stroke="#2a002a" stroke-width="4.6" stroke-linecap="round"/><path d="M15 19L26 31" stroke="#c01cc0" stroke-width="2.8" stroke-linecap="round"/><path d="M16 19.5L25.5 30" stroke="#f0a0f0" stroke-width="0.8"/><circle cx="9.8" cy="15.1" r="7.3" fill="#52cccc" stroke="#0a2a2a" stroke-width="1.4"/><path d="M6.5 10V19" stroke="#c8f4f4" stroke-width="1"/><path d="M12 14H16M12 16H16M12 18H16" stroke="#8ad8d8" stroke-width="1"/></svg>
<div style="left:676px;top:57px;width:25px;height:25px;background:#ecebe4;border-top:1px solid #ecebe4;border-left:1px solid #ecebe4;border-right:2px solid #a9a9a3;border-bottom:2px solid #a9a9a3;box-sizing:border-box;box-shadow:inset 1px 1px 0 #fff,inset -1px -1px 0 #cfcfc8;"></div>
<svg style="left:682px;top:63px" width="15" height="13" viewBox="0 0 15 13"><path shape-rendering="crispEdges" d="M3 0h3v1h-3zM9 0h3v1h-3zM3 1h1v1h-1zM5 1h1v1h-1zM9 1h1v1h-1zM11 1h1v1h-1zM3 2h3v1h-3zM9 2h3v1h-3zM2 3h5v1h-5zM8 3h5v1h-5zM1 4h2v1h-2zM4 4h5v1h-5zM10 4h4v1h-4zM0 5h15v1h-15zM0 6h2v1h-2zM3 6h3v1h-3zM7 6h2v1h-2zM10 6h5v1h-5zM0 7h2v1h-2zM3 7h3v1h-3zM7 7h2v1h-2zM10 7h5v1h-5zM0 8h2v1h-2zM3 8h6v1h-6zM10 8h5v1h-5zM0 9h7v1h-7zM8 9h7v1h-7zM0 10h1v1h-1zM2 10h3v1h-3zM10 10h1v1h-1zM12 10h3v1h-3zM0 11h1v1h-1zM2 11h3v1h-3zM10 11h1v1h-1zM12 11h3v1h-3zM0 12h5v1h-5zM10 12h5v1h-5z" fill="#000"/></svg>
<div style="left:788px;top:57px;width:25px;height:25px;background:#ecebe4;border-top:1px solid #ecebe4;border-left:1px solid #ecebe4;border-right:2px solid #a9a9a3;border-bottom:2px solid #a9a9a3;box-sizing:border-box;box-shadow:inset 1px 1px 0 #fff,inset -1px -1px 0 #cfcfc8;"></div>
<svg style="left:789px;top:58px" width="23" height="23" viewBox="0 0 23 23"><rect x="0" y="0" width="22" height="22" fill="#fff"/><path d="M10.5 1V22" stroke="#a0a0a0" stroke-width="1"/><path d="M1.5 3.5H9M1.5 5.5H9M1.5 9.5H9M1.5 11.5H9M1.5 15.5H9M1.5 17.5H9M12.5 3.5H20M12.5 5.5H20M12.5 9.5H20M12.5 11.5H20M12.5 15.5H20M12.5 17.5H20" stroke="#1010a0" stroke-width="1.1"/><path d="M6.5 18.5L21 10.5" stroke="#000" stroke-width="4"/><path d="M7 17.5L21 9.8" stroke="#f0e850" stroke-width="2.6"/><path d="M4 19.5L6.5 18.5" stroke="#000" stroke-width="1.2"/></svg>
<div style="left:676px;top:249px;width:25px;height:21px;background:#ecebe4;border-top:1px solid #ecebe4;border-left:1px solid #ecebe4;border-right:2px solid #a9a9a3;border-bottom:2px solid #a9a9a3;box-sizing:border-box;box-shadow:inset 1px 1px 0 #fff,inset -1px -1px 0 #cfcfc8;"></div>
<svg style="left:682px;top:252px" width="14" height="14" viewBox="0 0 14 14"><path d="M6.8 1.5H12.3L9.6 4.8L11.5 5.2L3.6 13.2L5.7 7.6H1.6Z" fill="#f4f020" stroke="#000" stroke-width="1.1" stroke-linejoin="miter"/></svg>
<div style="left:676px;top:284px;width:26px;height:21px;background:#ecebe4;border-top:1px solid #ecebe4;border-left:1px solid #ecebe4;border-right:2px solid #a9a9a3;border-bottom:2px solid #a9a9a3;box-sizing:border-box;box-shadow:inset 1px 1px 0 #fff,inset -1px -1px 0 #cfcfc8;"></div>
<svg style="left:682px;top:288px" width="15" height="13" viewBox="0 0 15 13"><path shape-rendering="crispEdges" d="M3 0h3v1h-3zM9 0h3v1h-3zM3 1h1v1h-1zM5 1h1v1h-1zM9 1h1v1h-1zM11 1h1v1h-1zM3 2h3v1h-3zM9 2h3v1h-3zM2 3h5v1h-5zM8 3h5v1h-5zM1 4h2v1h-2zM4 4h5v1h-5zM10 4h4v1h-4zM0 5h15v1h-15zM0 6h2v1h-2zM3 6h3v1h-3zM7 6h2v1h-2zM10 6h5v1h-5zM0 7h2v1h-2zM3 7h3v1h-3zM7 7h2v1h-2zM10 7h5v1h-5zM0 8h2v1h-2zM3 8h6v1h-6zM10 8h5v1h-5zM0 9h7v1h-7zM8 9h7v1h-7zM0 10h1v1h-1zM2 10h3v1h-3zM10 10h1v1h-1zM12 10h3v1h-3zM0 11h1v1h-1zM2 11h3v1h-3zM10 11h1v1h-1zM12 11h3v1h-3zM0 12h5v1h-5zM10 12h5v1h-5z" fill="#000"/></svg>
<div style="left:676px;top:377px;width:25px;height:21px;background:#ecebe4;border-top:1px solid #ecebe4;border-left:1px solid #ecebe4;border-right:2px solid #a9a9a3;border-bottom:2px solid #a9a9a3;box-sizing:border-box;box-shadow:inset 1px 1px 0 #fff,inset -1px -1px 0 #cfcfc8;"></div>
<svg style="left:680px;top:379.2px" width="16" height="16" viewBox="0 0 16 16"><path d="M8 8L13 12.8" stroke="#000a50" stroke-width="3.2" stroke-linecap="square"/><path d="M8.3 8.6L12.6 12.6" stroke="#3a8ae8" stroke-width="0.9"/><circle cx="5.6" cy="5.3" r="4.1" fill="#5ed8e0" stroke="#0a3038" stroke-width="1.3"/><circle cx="4.6" cy="4.4" r="1.5" fill="#b8f0f4"/></svg>
<div style="left:676px;top:441px;width:25px;height:21px;background:#ecebe4;border-top:1px solid #ecebe4;border-left:1px solid #ecebe4;border-right:2px solid #a9a9a3;border-bottom:2px solid #a9a9a3;box-sizing:border-box;box-shadow:inset 1px 1px 0 #fff,inset -1px -1px 0 #cfcfc8;"></div>
<svg style="left:680px;top:443.2px" width="16" height="16" viewBox="0 0 16 16"><path d="M8 8L13 12.8" stroke="#000a50" stroke-width="3.2" stroke-linecap="square"/><path d="M8.3 8.6L12.6 12.6" stroke="#3a8ae8" stroke-width="0.9"/><circle cx="5.6" cy="5.3" r="4.1" fill="#5ed8e0" stroke="#0a3038" stroke-width="1.3"/><circle cx="4.6" cy="4.4" r="1.5" fill="#b8f0f4"/></svg>
<div style="left:668px;top:501px;width:33px;height:28px;background:#ecebe4;border-top:1px solid #fff;border-left:1px solid #fff;border-right:2px solid #6e6e6a;border-bottom:2px solid #6e6e6a;box-sizing:border-box;box-shadow:inset -1px -1px 0 #b0b0aa;"></div>
<svg style="left:673px;top:507.5px" width="22" height="17" viewBox="0 0 22 17"><path d="M1.5 3.5V14.5H15.5L20.5 7.5H6.5L1.5 14.5M1.5 3.5L3 1.5H7.5L9 3.5H15.5V7.5" fill="none" stroke="#c4c4bf" stroke-width="1.1"/><path d="M2.5 15.5H16.5L21 9" fill="none" stroke="#fff" stroke-width="1"/></svg>
<svg style="left:960px;top:48px" width="28" height="28" viewBox="0 0 28 28"><path d="M5.5 12.5L9.5 8.5H21.5V14.5L17.5 18.5H5.5Z" fill="#1e9a1e" stroke="#000" stroke-width="1.1" stroke-linejoin="round"/><path d="M6.5 12L10 9H20.5L17 12Z" fill="#38e838"/><path d="M5.5 12.5H17.5L21.5 8.5M17.5 12.5V18.5" fill="none" stroke="#000" stroke-width="1"/><path d="M18 12.8L21 10V14L18 17Z" fill="#188a18"/><path d="M6.5 14.5H11" stroke="#30c830" stroke-width="1.5"/><path d="M17.8 2.8L18.8 4L14 10.5L17.2 13L9 24.8L7.8 24.3L10.8 16.2L7.8 14.3L12.6 8.8Z" fill="#f4f030" stroke="#000" stroke-width="1"/></svg>
<div style="left:13px;top:666px;width:63px;height:46px;background:#ecebe4;border-top:1px solid #fff;border-left:1px solid #fff;border-right:1px solid #a9a9a3;border-bottom:1px solid #a9a9a3;box-sizing:border-box;box-shadow:inset -1px -1px 0 #dadad3;"></div>
<div style="left:76px;top:666px;width:64px;height:47px;background:#ecebe4;border-top:1px solid #fff;border-left:1px solid #fff;border-right:2px solid #a9a9a3;border-bottom:2px solid #a9a9a3;box-sizing:border-box;box-shadow:inset -1px -1px 0 #d6d6cf;"></div>
<div style="left:141px;top:666px;width:63px;height:47px;background:#ecebe4;border-top:1px solid #fff;border-left:1px solid #fff;border-right:2px solid #a9a9a3;border-bottom:2px solid #a9a9a3;box-sizing:border-box;box-shadow:inset -1px -1px 0 #d6d6cf;"></div>
<div style="left:205px;top:666px;width:63px;height:46px;background:#ecebe4;border-top:1px solid #fff;border-left:1px solid #fff;border-right:1px solid #a9a9a3;border-bottom:1px solid #a9a9a3;box-sizing:border-box;box-shadow:inset -1px -1px 0 #dadad3;"></div>
<div style="left:269px;top:666px;width:63px;height:46px;background:#ecebe4;border-top:1px solid #fff;border-left:1px solid #fff;border-right:1px solid #a9a9a3;border-bottom:1px solid #a9a9a3;box-sizing:border-box;box-shadow:inset -1px -1px 0 #dadad3;"></div>
<div style="left:332px;top:666px;width:64px;height:46px;background:#ecebe4;border-top:1px solid #fff;border-left:1px solid #fff;border-right:1px solid #a9a9a3;border-bottom:1px solid #a9a9a3;box-sizing:border-box;box-shadow:inset -1px -1px 0 #dadad3;"></div>
<div style="left:397px;top:666px;width:63px;height:46px;background:#ecebe4;border-top:1px solid #fff;border-left:1px solid #fff;border-right:1px solid #a9a9a3;border-bottom:1px solid #a9a9a3;box-sizing:border-box;box-shadow:inset -1px -1px 0 #dadad3;"></div>
<div style="left:461px;top:666px;width:63px;height:46px;background:#ecebe4;border-top:1px solid #fff;border-left:1px solid #fff;border-right:1px solid #a9a9a3;border-bottom:1px solid #a9a9a3;box-sizing:border-box;box-shadow:inset -1px -1px 0 #dadad3;"></div>
<div style="left:525px;top:666px;width:63px;height:46px;background:#ecebe4;border-top:1px solid #fff;border-left:1px solid #fff;border-right:1px solid #a9a9a3;border-bottom:1px solid #a9a9a3;box-sizing:border-box;box-shadow:inset -1px -1px 0 #dadad3;"></div>
<div style="left:589px;top:666px;width:64px;height:46px;background:#ecebe4;border-top:1px solid #fff;border-left:1px solid #fff;border-right:1px solid #a9a9a3;border-bottom:1px solid #a9a9a3;box-sizing:border-box;box-shadow:inset -1px -1px 0 #dadad3;"></div>
<svg style="left:27px;top:673px" width="33" height="33" viewBox="0 0 33 33"><circle cx="16.3" cy="16.3" r="14.6" fill="#fff" stroke="#8a8a8a" stroke-width="1.3"/><circle cx="16.3" cy="16.3" r="11.8" fill="#1414c8"/><path d="M11.3 12.8C11.3 9.6 13.6 8 16.3 8C19 8 21.3 9.6 21.3 12.3C21.3 15.3 17.8 15.6 17.8 18.6V19.6H14.8V18.2C14.8 14.6 18.1 14.3 18.1 12.4C18.1 11.3 17.3 10.7 16.3 10.7C15.2 10.7 14.4 11.5 14.4 12.8Z" fill="#fff"/><circle cx="16.3" cy="23.3" r="2" fill="#fff"/></svg>
<svg style="left:92px;top:666px" width="34" height="30" viewBox="0 0 34 30"><path d="M8.3 24.8L8.4 19.8L12.4 22.4Z" fill="#000"/><path d="M8.5 20L15.8 8.1L19.6 10.4L12.3 22.3Z" fill="#f0ec40" stroke="#000" stroke-width="1.1" stroke-dasharray="1.2 0.6"/><path d="M15.6 8.3L17.6 4.8C18.4 3.3 20.4 2.8 21.8 3.7C23.2 4.6 23.5 6.4 22.7 7.8L19.8 10.6Z" fill="#7a1018" stroke="#000" stroke-width="0.9"/><rect x="3" y="24" width="1.2" height="1.2" fill="#000"/><rect x="5" y="24" width="1.2" height="1.2" fill="#000"/><rect x="4" y="26" width="1.2" height="1.2" fill="#000"/><rect x="6" y="26" width="1.2" height="1.2" fill="#000"/><rect x="3" y="28" width="1.2" height="1.2" fill="#000"/><rect x="5" y="28" width="1.2" height="1.2" fill="#000"/><rect x="26.2" y="7.1" width="4.6" height="11.5" fill="#000"/><rect x="26.2" y="20.2" width="4.6" height="3.6" fill="#000"/></svg>
<div class="t" style="top:695px;font-size:13px;color:#080808;font-weight:bold;left:98.5px;transform:scaleX(0.88);transform-origin:0 0;">Edit</div>
<div style="left:98.5px;top:708.5px;width:8.5px;height:1.2px;background:#000;"></div>
<svg style="left:152px;top:664px" width="40" height="30" viewBox="0 0 40 30"><rect x="4.5" y="10.5" width="18" height="14" fill="#fff" stroke="#000" stroke-width="1.2"/><rect x="4" y="10" width="19" height="3" fill="#0a0a80"/><rect x="6" y="13.8" width="2.8" height="1.1" fill="#000"/><rect x="10" y="13.8" width="2.8" height="1.1" fill="#000"/><rect x="14" y="13.8" width="2.8" height="1.1" fill="#000"/><rect x="18" y="13.8" width="2.8" height="1.1" fill="#000"/><rect x="6" y="15.8" width="2.8" height="1.1" fill="#000"/><rect x="10" y="15.8" width="2.8" height="1.1" fill="#000"/><rect x="14" y="15.8" width="2.8" height="1.1" fill="#000"/><rect x="18" y="15.8" width="2.8" height="1.1" fill="#000"/><rect x="6" y="17.8" width="2.8" height="1.1" fill="#000"/><rect x="10" y="17.8" width="2.8" height="1.1" fill="#000"/><rect x="14" y="17.8" width="2.8" height="1.1" fill="#000"/><rect x="18" y="17.8" width="2.8" height="1.1" fill="#000"/><rect x="6" y="19.8" width="2.8" height="1.1" fill="#000"/><rect x="10" y="19.8" width="2.8" height="1.1" fill="#000"/><rect x="14" y="19.8" width="2.8" height="1.1" fill="#000"/><rect x="18" y="19.8" width="2.8" height="1.1" fill="#000"/><rect x="6" y="21.8" width="2.8" height="1.1" fill="#000"/><rect x="10" y="21.8" width="2.8" height="1.1" fill="#000"/><rect x="14" y="21.8" width="2.8" height="1.1" fill="#000"/><rect x="18" y="21.8" width="2.8" height="1.1" fill="#000"/><circle cx="22.3" cy="9.3" r="3.2" fill="#f4f440" opacity="0.85"/><path d="M22.3 3.8V14.8M16.8 9.3H27.8M18.5 5.5L26.1 13.1M26.1 5.5L18.5 13.1" stroke="#8a8a10" stroke-width="0.9"/><circle cx="22.3" cy="9.3" r="1.6" fill="#f8f860"/><rect x="30.2" y="9" width="4.8" height="11.5" fill="#000"/><rect x="30.2" y="22.2" width="4.8" height="3.6" fill="#000"/></svg>
<div class="t" style="top:695px;font-size:13px;color:#080808;font-weight:bold;left:160.6px;transform:scaleX(0.88);transform-origin:0 0;">New</div>
<div style="left:160.8px;top:708.5px;width:9.5px;height:1.2px;background:#000;"></div>
<svg style="left:218px;top:672px" width="36" height="30" viewBox="0 0 36 30"><path d="M6.5 16.3L18.5 5V10H29.8V20.6H18.5V25.8Z" fill="#8a8a88" transform="translate(-0.9 0.9)"/><path d="M6.5 16.3L18.5 5V10H29.8V20.6H18.5V25.8Z" fill="#000"/><path d="M8.5 15.6L17.6 7.2" stroke="#fff" stroke-width="0.8" stroke-dasharray="0.9 0.9"/><path d="M19 11.3H29" stroke="#e8e8e8" stroke-width="0.8"/></svg>
<svg style="left:282px;top:672px" width="36" height="30" viewBox="0 0 36 30"><g transform="translate(-0.9 0.9)"><path d="M6.5 16.3L18.5 5V10H29.8V20.6H18.5V25.8Z" fill="#8a8a88" transform="translate(36 0) scale(-1 1)"/></g><g transform="translate(36 0) scale(-1 1)"><path d="M6.5 16.3L18.5 5V10H29.8V20.6H18.5V25.8Z" fill="#000"/></g><path d="M28.5 15.6L19.4 7.2" stroke="#fff" stroke-width="0.8" stroke-dasharray="0.9 0.9"/><path d="M7.5 11.3H17" stroke="#e8e8e8" stroke-width="0.8"/></svg>
<svg style="left:347px;top:671px" width="35" height="34" viewBox="0 0 35 34"><path d="M1.5 1.5H23L29.5 8V32.5H1.5Z" fill="#f4f8ff" stroke="#3a5a9a" stroke-width="1"/><path d="M23 1.5V8H29.5" fill="#dde6f4" stroke="#8aa0c8" stroke-width="1"/><path d="M26 1H31.5V6.5Z" fill="#000"/><rect x="9" y="5" width="12" height="2" fill="#b01020"/><path d="M5 10.5H6M8 10.5H15M18 10.5H23M5 13.5H6M8 13.5H15M18 13.5H23M5 16.5H6M8 16.5H15M18 16.5H23M5 19.5H6M8 19.5H15M5 22.5H6M8 22.5H15M5 25.5H6M8 25.5H15M5 28.5H6M8 28.5H15" stroke="#1a2a5a" stroke-width="1.2"/><circle cx="25" cy="23.5" r="7.5" fill="#5a9ad0" stroke="#2a5a8a" stroke-width="1"/><circle cx="25" cy="23.5" r="5.8" fill="#6eaee0"/><rect x="23.8" y="21.5" width="2.6" height="6.5" fill="#fff"/><circle cx="25.1" cy="19" r="1.4" fill="#fff"/></svg>
<svg style="left:411px;top:672px" width="35" height="33" viewBox="0 0 35 33"><rect x="1.5" y="1.5" width="15" height="18" fill="#f0f4fc" stroke="#3a4e8a" stroke-width="1"/><rect x="1.5" y="1.5" width="15" height="2" fill="#5a80d0"/><path d="M4 6.5H14M4 9.5H14M4 12.5H14M4 15.5H14" stroke="#8a8a98" stroke-width="1"/><path d="M17.5 13.5H26.5L32.5 19.5V31.5H17.5Z" fill="#f0f4fc" stroke="#3a4e8a" stroke-width="1"/><path d="M26.5 13.5V19.5H32.5" fill="#c8d4f0" stroke="#3a4e8a" stroke-width="0.8"/><path d="M20 18.5H30M20 21.5H30M20 24.5H30M20 27.5H30" stroke="#8a8a98" stroke-width="1"/><path d="M17 30.5H13C10 30.5 8.3 27 8.3 23V20.5" fill="none" stroke="#2a8a2a" stroke-width="3.4"/><path d="M17 30.5H13C10 30.5 8.3 27 8.3 23V20.5" fill="none" stroke="#70e070" stroke-width="1.8"/><path d="M4.5 20.5L8.3 16L12.1 20.5Z" fill="#70e070" stroke="#2a8a2a" stroke-width="0.8"/></svg>
<svg style="left:477px;top:671px" width="32" height="33" viewBox="0 0 32 33"><rect x="5" y="3" width="23" height="26" fill="#fff" stroke="#000" stroke-width="2"/><rect x="3" y="6" width="23" height="25" fill="#fff" stroke="#000" stroke-width="2"/><path d="M12 9.5H18M9 11.5H21" stroke="#c81818" stroke-width="1"/><path d="M6 14.5H23M6 26.5H23" stroke="#000" stroke-width="1"/><path d="M7 16.5H10M12 16.5H15M18 16.5H21M7 18.5H10M12 18.5H15M18 18.5H21M7 20.5H10M12 20.5H15M18 20.5H21M7 22.5H10M12 22.5H15M18 22.5H21M7 24.5H10M12 24.5H15M18 24.5H21" stroke="#1a1aa8" stroke-width="1"/><path d="M17 28.5H21" stroke="#c81818" stroke-width="1"/></svg>
<svg style="left:540px;top:672px" width="32" height="31" viewBox="0 0 32 31"><rect x="6.5" y="1.5" width="19" height="20" fill="#eef2fa" stroke="#6a7aa0" stroke-width="1"/><rect x="6.5" y="1.5" width="19" height="2.5" fill="#5a80d0"/><path d="M9 8H12M14 8H20M9 12H13" stroke="#6a7a9a" stroke-width="1.2"/><rect x="14.5" y="6.5" width="6" height="3" fill="none" stroke="#6a7a9a" stroke-width="1"/><rect x="1.5" y="12.5" width="16" height="17" fill="#eef2fa" stroke="#8a9ab8" stroke-width="1"/><path d="M4 16H14M4 19H14M4 22H14M4 25H14" stroke="#8a9ab8" stroke-width="1"/><rect x="14.5" y="10.5" width="15" height="14" fill="#f0f4fa" stroke="#4a5a7a" stroke-width="1"/><path d="M15 24L20 17L24 21L29 24Z" fill="#48a048"/><circle cx="24" cy="14.5" r="1.8" fill="#f08a30"/></svg>
<svg style="left:600px;top:668px" width="40" height="40" viewBox="0 0 40 40"><defs><linearGradient id="dg" x1="0" y1="0" x2="1" y2="1"><stop offset="0" stop-color="#e8a040"/><stop offset="1" stop-color="#c87a20"/></linearGradient></defs><path d="M11 6L18 4V34L11.5 32Z" fill="#8a5212" stroke="#6a3a08" stroke-width="0.8"/><path d="M17.5 4L35 5.5V33.5L18 35.5Z" fill="url(#dg)" stroke="#9a5a10" stroke-width="1"/><rect x="19.8" y="8" width="12.5" height="7.3" fill="#fff4f0"/><text x="20.3" y="14.2" font-family="Liberation Sans" font-size="7" font-weight="bold" fill="#d0203a" textLength="11.5" lengthAdjust="spacingAndGlyphs">EXIT</text><circle cx="22.5" cy="22" r="2.2" fill="#d08a30" stroke="#a86010" stroke-width="0.6"/><path d="M4 12.5C4.5 18 8 21.5 13 21.5V18L18 22L12 27.5V24C7.5 24 4 20 4 12.5Z" fill="#48c040" stroke="#2a9028" stroke-width="0.7"/></svg>
</body></html>
